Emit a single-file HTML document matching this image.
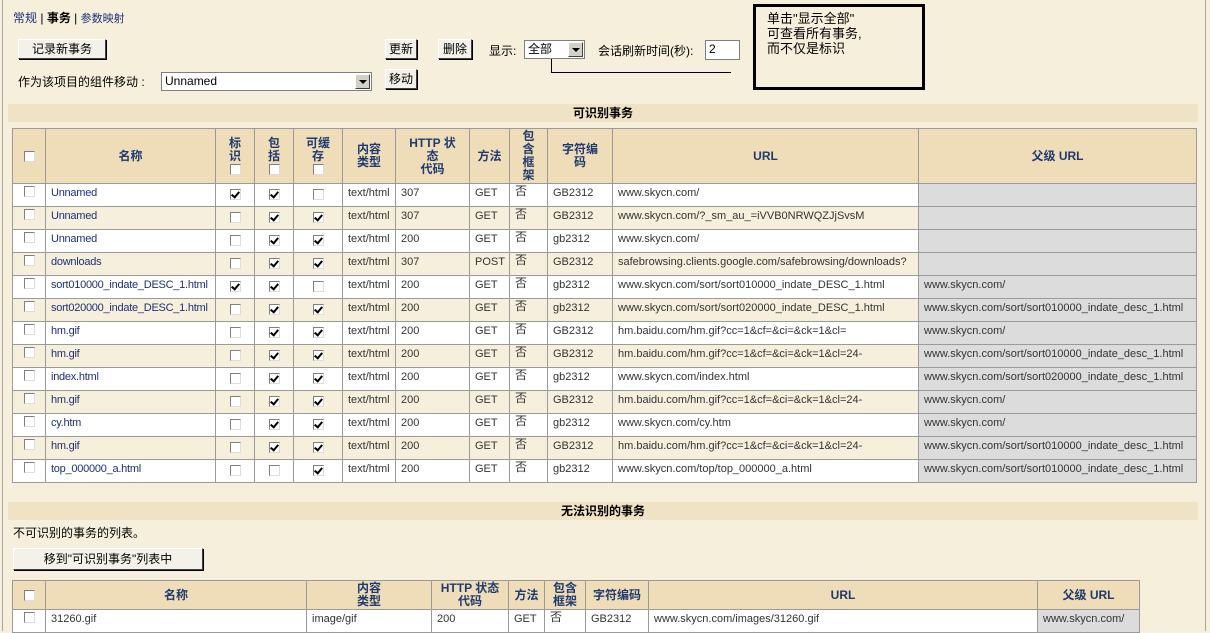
<!DOCTYPE html>
<html><head><meta charset="utf-8">
<style>
*{margin:0;padding:0;box-sizing:border-box}
body{width:1210px;height:631px;overflow:hidden;background:#f6efdb;font-family:"Liberation Sans","Noto Sans CJK SC",sans-serif;font-size:11px;color:#000;position:relative}
.frame{position:absolute;left:2px;top:0;width:1204px;height:631px;border-left:1px solid #a9a9a9;border-right:1px solid #a9a9a9}
.abs{position:absolute}
.btn{position:absolute;background:#f4f1ea;border:1px solid;border-color:#fff #404040 #404040 #fff;box-shadow:1px 1px 0 #000;font-size:12px;text-align:center;line-height:18px}
.bar{position:absolute;left:8px;width:1190px;height:18px;background:#f0e2c4;font-weight:bold;font-size:12px;text-align:center;line-height:18px}
table{position:absolute;border-collapse:collapse;table-layout:fixed;background:#fff}
td,th{border:1px solid #9a9a9a;padding:0 5px;white-space:nowrap;overflow:hidden;font-size:11px}
th{background:#efdcb8;color:#1f3a6e;font-weight:bold;font-size:12px;line-height:13px;text-align:center}
td{height:23px;vertical-align:top;padding-top:3px;color:#333;line-height:13px}
td.f{padding-top:1px;font-size:12px}
tr.a td{background:#f6efdb}
td.n{color:#1e2f7a;letter-spacing:-0.25px}
td.p{background:#dcdcdc!important}
td.c{text-align:center;padding:0}
.cb{display:inline-block;width:11px;height:11px;background:#fff;border:1px solid #808080;border-right-color:#ddd;border-bottom-color:#ddd;position:relative;vertical-align:middle}
.cb.k::after{content:"";position:absolute;left:2px;top:0px;width:3px;height:6px;border:solid #000;border-width:0 2px 2px 0;transform:rotate(40deg)}
td.c .cb{margin-top:5px}
td.c.t .cb{margin-top:2px}
.sel{position:absolute;background:#fff;border:1px solid #7f7f7f;font-size:12px;line-height:16px;padding-left:3px}
.arr{position:absolute;right:1px;top:1px;width:15px;height:15px;background:#d4d0c8;border:1px solid;border-color:#fff #404040 #404040 #fff}
.arr::after{content:"";position:absolute;left:3px;top:5px;border:4px solid transparent;border-top:4px solid #000;border-bottom:0}
</style></head><body>
<div class="frame"></div>
<div class="abs" style="left:13px;top:9px;font-size:12px;color:#1e2f7a">常规 <span style="color:#000">|</span> <b style="color:#000">事务</b> <span style="color:#000">|</span> <span style="font-size:11px">参数映射</span></div>
<div class="btn" style="left:18px;top:39px;width:88px;height:20px">记录新事务</div>
<div class="btn" style="left:385px;top:39px;width:32px;height:20px">更新</div>
<div class="btn" style="left:438px;top:39px;width:34px;height:20px">删除</div>
<div class="abs" style="left:489px;top:42px;font-size:12px">显示:</div>
<div class="sel" style="left:524px;top:40px;width:61px;height:19px">全部<div class="arr"></div></div>
<div class="abs" style="left:598px;top:42px;font-size:12px">会话刷新时间(秒):</div>
<div class="sel" style="left:705px;top:40px;width:35px;height:20px">2</div>
<div class="abs" style="left:551px;top:59px;width:1px;height:13px;background:#000"></div>
<div class="abs" style="left:551px;top:72px;width:180px;height:1px;background:#000"></div>
<div class="abs" style="left:753px;top:4px;width:172px;height:86px;border:3px solid #000;padding:4px 0 0 11px;font-size:13px;line-height:15px">单击"显示全部"<br>可查看所有事务,<br>而不仅是标识</div>
<div class="abs" style="left:18px;top:73px;font-size:12px">作为该项目的组件移动 :</div>
<div class="sel" style="left:161px;top:72px;width:211px;height:19px">Unnamed<div class="arr"></div></div>
<div class="btn" style="left:385px;top:69px;width:32px;height:20px">移动</div>

<div class="bar" style="top:104px">可识别事务</div>
<table style="left:12px;top:128px;width:1184px">
<colgroup><col style="width:33px"><col style="width:170px"><col style="width:39px"><col style="width:39px"><col style="width:49px"><col style="width:53px"><col style="width:74px"><col style="width:40px"><col style="width:38px"><col style="width:65px"><col style="width:306px"><col style="width:278px"></colgroup>
<tr style="height:55px"><th><span class="cb"></span></th><th>名称</th><th>标<br>识<br><span class="cb"></span></th><th>包<br>括<br><span class="cb"></span></th><th>可缓<br>存<br><span class="cb"></span></th><th>内容<br>类型</th><th>HTTP 状<br>态<br>代码</th><th>方法</th><th>包<br>含<br>框<br>架</th><th>字符编<br>码</th><th>URL</th><th>父级 URL</th></tr>
<tr><td class="c t"><span class="cb"></span></td><td class="n">Unnamed</td><td class="c"><span class="cb k"></span></td><td class="c"><span class="cb k"></span></td><td class="c"><span class="cb"></span></td><td>text/html</td><td>307</td><td>GET</td><td class="f">否</td><td>GB2312</td><td>www.skycn.com/</td><td class="p"></td></tr>
<tr class="a"><td class="c t"><span class="cb"></span></td><td class="n">Unnamed</td><td class="c"><span class="cb"></span></td><td class="c"><span class="cb k"></span></td><td class="c"><span class="cb k"></span></td><td>text/html</td><td>307</td><td>GET</td><td class="f">否</td><td>GB2312</td><td>www.skycn.com/?_sm_au_=iVVB0NRWQZJjSvsM</td><td class="p"></td></tr>
<tr><td class="c t"><span class="cb"></span></td><td class="n">Unnamed</td><td class="c"><span class="cb"></span></td><td class="c"><span class="cb k"></span></td><td class="c"><span class="cb k"></span></td><td>text/html</td><td>200</td><td>GET</td><td class="f">否</td><td>gb2312</td><td>www.skycn.com/</td><td class="p"></td></tr>
<tr class="a"><td class="c t"><span class="cb"></span></td><td class="n">downloads</td><td class="c"><span class="cb"></span></td><td class="c"><span class="cb k"></span></td><td class="c"><span class="cb k"></span></td><td>text/html</td><td>307</td><td>POST</td><td class="f">否</td><td>GB2312</td><td>safebrowsing.clients.google.com/safebrowsing/downloads?</td><td class="p"></td></tr>
<tr><td class="c t"><span class="cb"></span></td><td class="n">sort010000_indate_DESC_1.html</td><td class="c"><span class="cb k"></span></td><td class="c"><span class="cb k"></span></td><td class="c"><span class="cb"></span></td><td>text/html</td><td>200</td><td>GET</td><td class="f">否</td><td>gb2312</td><td>www.skycn.com/sort/sort010000_indate_DESC_1.html</td><td class="p">www.skycn.com/</td></tr>
<tr class="a"><td class="c t"><span class="cb"></span></td><td class="n">sort020000_indate_DESC_1.html</td><td class="c"><span class="cb"></span></td><td class="c"><span class="cb k"></span></td><td class="c"><span class="cb k"></span></td><td>text/html</td><td>200</td><td>GET</td><td class="f">否</td><td>gb2312</td><td>www.skycn.com/sort/sort020000_indate_DESC_1.html</td><td class="p">www.skycn.com/sort/sort010000_indate_desc_1.html</td></tr>
<tr><td class="c t"><span class="cb"></span></td><td class="n">hm.gif</td><td class="c"><span class="cb"></span></td><td class="c"><span class="cb k"></span></td><td class="c"><span class="cb k"></span></td><td>text/html</td><td>200</td><td>GET</td><td class="f">否</td><td>GB2312</td><td>hm.baidu.com/hm.gif?cc=1&amp;cf=&amp;ci=&amp;ck=1&amp;cl=</td><td class="p">www.skycn.com/</td></tr>
<tr class="a"><td class="c t"><span class="cb"></span></td><td class="n">hm.gif</td><td class="c"><span class="cb"></span></td><td class="c"><span class="cb k"></span></td><td class="c"><span class="cb k"></span></td><td>text/html</td><td>200</td><td>GET</td><td class="f">否</td><td>GB2312</td><td>hm.baidu.com/hm.gif?cc=1&amp;cf=&amp;ci=&amp;ck=1&amp;cl=24-</td><td class="p">www.skycn.com/sort/sort010000_indate_desc_1.html</td></tr>
<tr><td class="c t"><span class="cb"></span></td><td class="n">index.html</td><td class="c"><span class="cb"></span></td><td class="c"><span class="cb k"></span></td><td class="c"><span class="cb k"></span></td><td>text/html</td><td>200</td><td>GET</td><td class="f">否</td><td>gb2312</td><td>www.skycn.com/index.html</td><td class="p">www.skycn.com/sort/sort020000_indate_desc_1.html</td></tr>
<tr class="a"><td class="c t"><span class="cb"></span></td><td class="n">hm.gif</td><td class="c"><span class="cb"></span></td><td class="c"><span class="cb k"></span></td><td class="c"><span class="cb k"></span></td><td>text/html</td><td>200</td><td>GET</td><td class="f">否</td><td>GB2312</td><td>hm.baidu.com/hm.gif?cc=1&amp;cf=&amp;ci=&amp;ck=1&amp;cl=24-</td><td class="p">www.skycn.com/</td></tr>
<tr><td class="c t"><span class="cb"></span></td><td class="n">cy.htm</td><td class="c"><span class="cb"></span></td><td class="c"><span class="cb k"></span></td><td class="c"><span class="cb k"></span></td><td>text/html</td><td>200</td><td>GET</td><td class="f">否</td><td>gb2312</td><td>www.skycn.com/cy.htm</td><td class="p">www.skycn.com/</td></tr>
<tr class="a"><td class="c t"><span class="cb"></span></td><td class="n">hm.gif</td><td class="c"><span class="cb"></span></td><td class="c"><span class="cb k"></span></td><td class="c"><span class="cb k"></span></td><td>text/html</td><td>200</td><td>GET</td><td class="f">否</td><td>GB2312</td><td>hm.baidu.com/hm.gif?cc=1&amp;cf=&amp;ci=&amp;ck=1&amp;cl=24-</td><td class="p">www.skycn.com/sort/sort010000_indate_desc_1.html</td></tr>
<tr><td class="c t"><span class="cb"></span></td><td class="n">top_000000_a.html</td><td class="c"><span class="cb"></span></td><td class="c"><span class="cb"></span></td><td class="c"><span class="cb k"></span></td><td>text/html</td><td>200</td><td>GET</td><td class="f">否</td><td>gb2312</td><td>www.skycn.com/top/top_000000_a.html</td><td class="p">www.skycn.com/sort/sort010000_indate_desc_1.html</td></tr>
</table>

<div class="bar" style="top:502px">无法识别的事务</div>
<div class="abs" style="left:13px;top:524px;font-size:12px">不可识别的事务的列表。</div>
<div class="btn" style="left:13px;top:548px;width:190px;height:22px;line-height:20px">移到"可识别事务"列表中</div>
<table style="left:12px;top:580px;width:1127px">
<colgroup><col style="width:33px"><col style="width:261px"><col style="width:125px"><col style="width:77px"><col style="width:36px"><col style="width:41px"><col style="width:63px"><col style="width:389px"><col style="width:102px"></colgroup>
<tr style="height:29px"><th><span class="cb"></span></th><th>名称</th><th>内容<br>类型</th><th>HTTP 状态<br>代码</th><th>方法</th><th>包含<br>框架</th><th>字符编码</th><th>URL</th><th>父级 URL</th></tr>
<tr><td class="c t"><span class="cb"></span></td><td>31260.gif</td><td>image/gif</td><td>200</td><td>GET</td><td class="f">否</td><td>GB2312</td><td>www.skycn.com/images/31260.gif</td><td class="p">www.skycn.com/</td></tr>
</table>
</body></html>
